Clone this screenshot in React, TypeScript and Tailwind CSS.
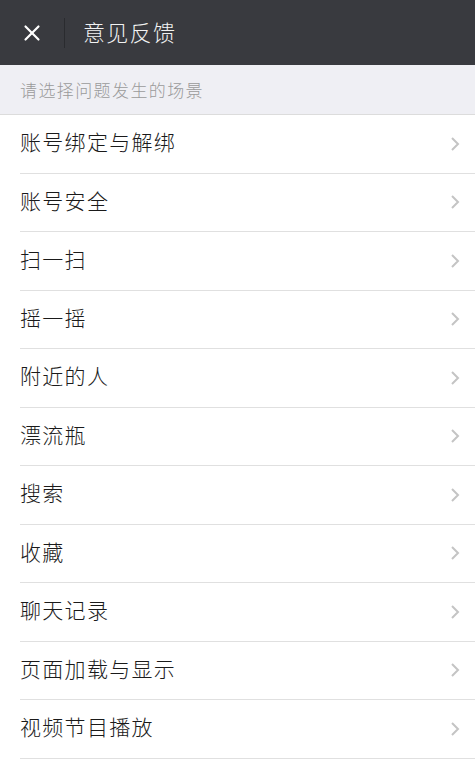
import { X } from 'lucide-react'

const scenes = [
  '账号绑定与解绑',
  '账号安全',
  '扫一扫',
  '摇一摇',
  '附近的人',
  '漂流瓶',
  '搜索',
  '收藏',
  '聊天记录',
  '页面加载与显示',
  '视频节目播放',
]

const Chevron = () => (
  <svg width="10" height="16" viewBox="0 0 10 16" fill="none">
    <path d="M2 2l6 6-6 6" stroke="#c4c4c4" strokeWidth="2" />
  </svg>
)

export default function App() {
  return (
    <div
      className="h-[759px] w-[475px] overflow-hidden bg-white font-light"
      style={{ fontFamily: '"Noto Sans CJK SC", "Noto Sans", sans-serif' }}
    >
      <div className="flex h-[65px] items-center bg-[#393a3f]">
        <div className="flex w-[64px] items-center justify-center">
          <X size={26} color="#ffffff" strokeWidth={2} />
        </div>
        <div className="h-[30px] w-px bg-[#2a2b2f]" />
        <span className="pb-[3px] pl-[18px] text-[22px] tracking-[1.3px] text-[#f2f2f2]">
          意见反馈
        </span>
      </div>

      <div className="flex h-[50px] items-center border-b border-[#dcdcdc] bg-[#efeff4] px-5 pt-[1px] text-[17px] tracking-[1.4px] text-[#9a9a9a]">
        请选择问题发生的场景
      </div>

      <div>
        {scenes.map((name) => (
          <div key={name} className="pl-5">
            <div className="flex h-[58.5px] items-center justify-between border-b border-[#e0e0e0] pr-[15px]">
              <span className="pb-[4px] text-[21px] tracking-[1.3px] text-[#1a1a1a]">{name}</span>
              <Chevron />
            </div>
          </div>
        ))}
      </div>
    </div>
  )
}
